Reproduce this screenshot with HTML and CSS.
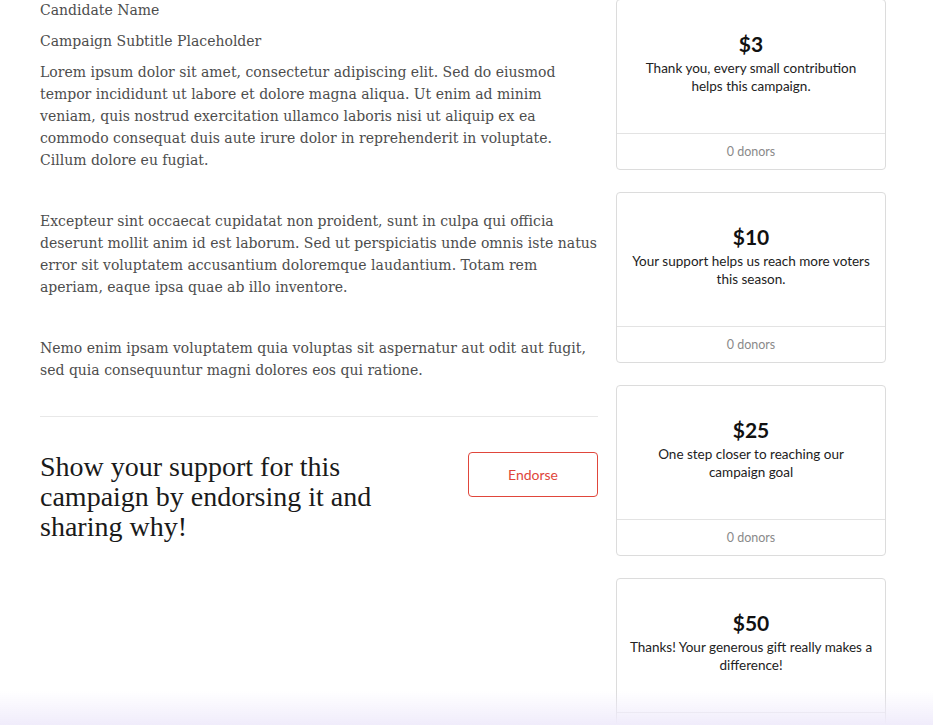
FILE: index.html
```html
<!DOCTYPE html>
<html lang="en">
<head>
<meta charset="utf-8">
<title>Campaign</title>
<link rel="stylesheet" href="styles.css">
</head>
<body>
<div class="page">
  <main class="story">
    <p class="meta">Candidate Name</p>
    <p class="meta">Campaign Subtitle Placeholder</p>
    <p class="para">Lorem ipsum dolor sit amet, consectetur adipiscing elit. Sed do eiusmod tempor incididunt ut labore et dolore magna aliqua. Ut enim ad minim veniam, quis nostrud exercitation ullamco laboris nisi ut aliquip ex ea commodo consequat duis aute irure dolor in reprehenderit in voluptate. Cillum dolore eu fugiat.</p>
    <p class="para">Excepteur sint occaecat cupidatat non proident, sunt in culpa qui officia deserunt mollit anim id est laborum. Sed ut perspiciatis unde omnis iste natus error sit voluptatem accusantium doloremque laudantium. Totam rem aperiam, eaque ipsa quae ab illo inventore.</p>
    <p class="para">Nemo enim ipsam voluptatem quia voluptas sit aspernatur aut odit aut fugit, sed quia consequuntur magni dolores eos qui ratione.</p>
    <hr class="rule">
    <section class="endorse">
      <h2 class="endorse-title">Show your support for this campaign by endorsing it and sharing why!</h2>
      <button class="endorse-btn" type="button">Endorse</button>
    </section>
  </main>
  <aside class="rewards">
    <div class="card">
      <div class="card-body">
        <div class="amount">$3</div>
        <div class="desc">Thank you, every small contribution helps this campaign.</div>
      </div>
      <div class="card-foot">0 donors</div>
    </div>
    <div class="card">
      <div class="card-body">
        <div class="amount">$10</div>
        <div class="desc">Your support helps us reach more voters this season.</div>
      </div>
      <div class="card-foot">0 donors</div>
    </div>
    <div class="card">
      <div class="card-body">
        <div class="amount">$25</div>
        <div class="desc">One step closer to reaching our campaign goal</div>
      </div>
      <div class="card-foot">0 donors</div>
    </div>
    <div class="card">
      <div class="card-body">
        <div class="amount">$50</div>
        <div class="desc">Thanks! Your generous gift really makes a difference!</div>
      </div>
      <div class="card-foot">0 donors</div>
    </div>
  </aside>
</div>
<div class="fade"></div>
</body>
</html>
```

FILE: styles.css
```css
html, body {
  margin: 0;
  padding: 0;
  background: #ffffff;
}

.page {
  display: flex;
  align-items: flex-start;
  gap: 18px;
  padding-left: 40px;
  margin-top: -1px;
}

.story {
  width: 558px;
  flex: none;
  font-family: "DejaVu Serif", "Liberation Serif", serif;
  color: #4d4d4d;
  font-size: 14px;
  line-height: 22px;
}

.meta {
  margin: 0 0 9px 0;
}

.para {
  margin: 0 0 39px 0;
}

.rule {
  border: 0;
  border-top: 1px solid #e8e8e8;
  margin: -4px 0 35px 0;
}

.endorse {
  display: flex;
  justify-content: space-between;
  align-items: flex-start;
}

.endorse-title {
  margin: 0;
  width: 350px;
  font-family: "Liberation Serif", "DejaVu Serif", serif;
  font-weight: normal;
  font-size: 28px;
  line-height: 30px;
  color: #1a1a1a;
}

.endorse-btn {
  width: 130px;
  height: 45px;
  border: 1px solid #e0463b;
  border-radius: 4px;
  background: #ffffff;
  color: #e0463b;
  font-family: "Lato", "Open Sans", sans-serif;
  font-size: 14px;
  padding: 0;
}

.rewards {
  width: 270px;
  flex: none;
  display: flex;
  flex-direction: column;
  gap: 22px;
}

.card {
  border: 1px solid #dcdcdc;
  border-radius: 4px;
  background: #ffffff;
  font-family: "Lato", "Open Sans", sans-serif;
  text-align: center;
}

.card-body {
  height: 133px;
  box-sizing: border-box;
  padding: 31px 12px 0;
}

.amount {
  font-size: 21px;
  line-height: 25px;
  font-weight: 700;
  color: #111111;
}

.desc {
  margin-top: 3px;
  font-size: 13.5px;
  line-height: 18px;
  color: #222222;
}

.card-foot {
  border-top: 1px solid #e3e3e3;
  height: 35px;
  line-height: 35px;
  font-size: 12.5px;
  color: #8a8a8a;
}

.fade {
  position: fixed;
  left: 0;
  right: 0;
  bottom: 0;
  height: 34px;
  background: linear-gradient(to bottom, rgba(243, 240, 252, 0), rgba(240, 236, 251, 1));
  pointer-events: none;
}
```
